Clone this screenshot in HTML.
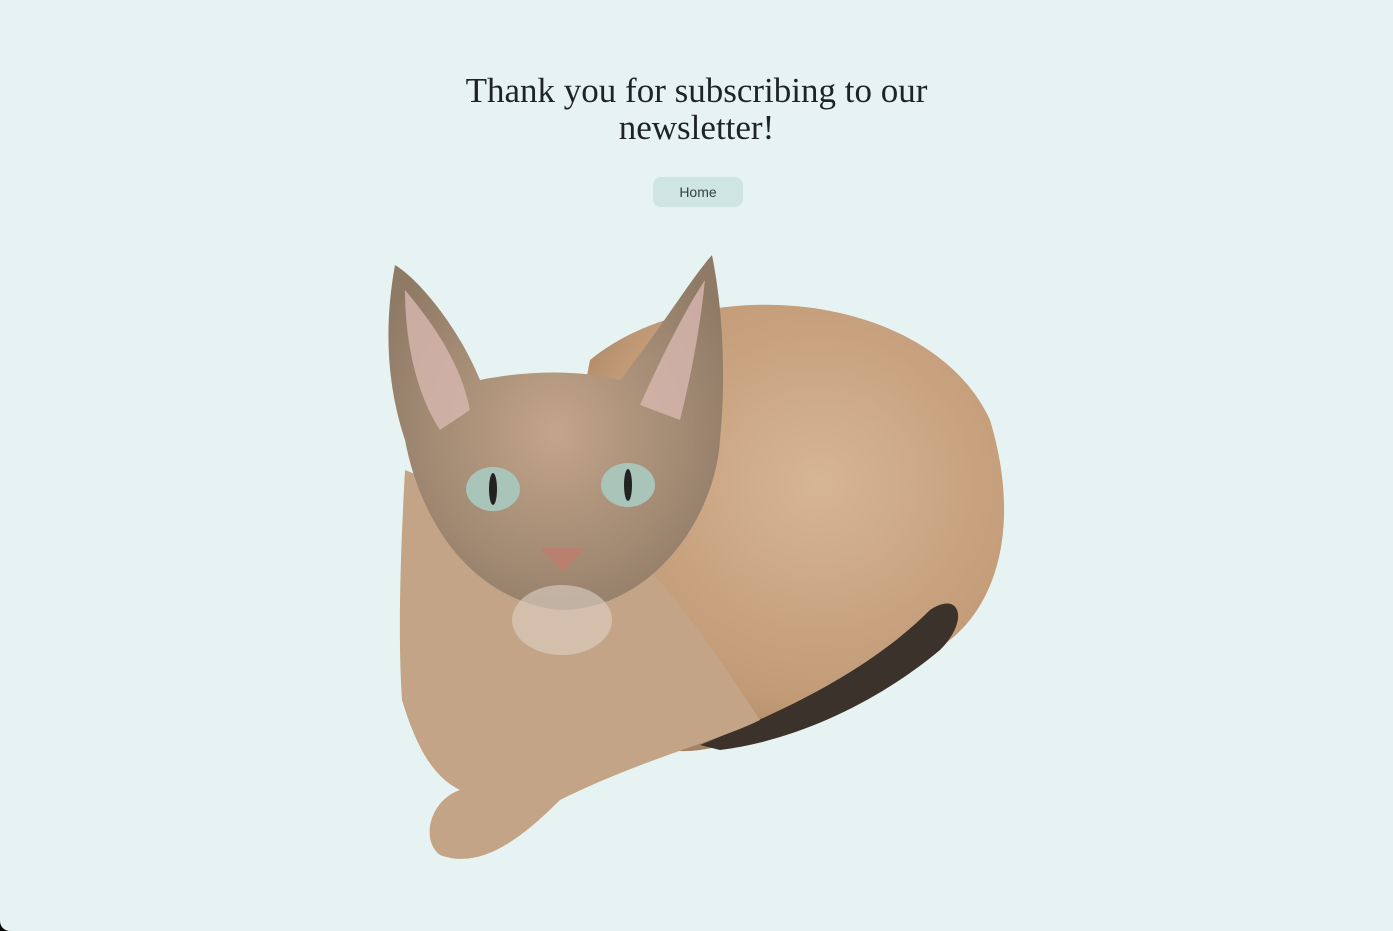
<!DOCTYPE html>
<html><head><meta charset="utf-8"><style>
html,body{margin:0;padding:0;width:1393px;height:931px;overflow:hidden;background:#000}
.page{position:absolute;left:0;top:0;width:1393px;height:931px;background:#e7f3f3;border-radius:0 0 0 10px}
h1{position:absolute;top:72px;left:0;width:1393px;margin:0;text-align:center;font-family:"Liberation Serif",serif;font-weight:normal;font-size:35px;line-height:37px;color:#1e2326}
.btn{position:absolute;left:653px;top:177px;width:90px;height:30px;border-radius:8px;background:#cfe5e1;font-family:"Liberation Sans",sans-serif;font-size:14px;line-height:31px;text-align:center;color:#34413f}
svg{position:absolute;left:0;top:0}
</style></head><body><div class="page">
<h1>Thank you for subscribing to our<br>newsletter!</h1>
<div class="btn">Home</div>
<svg width="1393" height="931" viewBox="0 0 1393 931">
<defs>
<radialGradient id="b" cx="0.6" cy="0.4" r="0.7"><stop offset="0" stop-color="#d6b595"/><stop offset="0.7" stop-color="#c29a76"/><stop offset="1" stop-color="#9b7a5c"/></radialGradient>
<radialGradient id="h" cx="0.5" cy="0.5" r="0.6"><stop offset="0" stop-color="#c3a58a"/><stop offset="1" stop-color="#8f7a66"/></radialGradient>
<filter id="s"><feGaussianBlur stdDeviation="6"/></filter>
</defs>
<path d="M590 360 C700 270 930 290 990 420 C1020 520 1000 600 950 640 C880 700 770 740 700 750 C620 760 560 700 540 620 Z" fill="url(#b)"/>
<path d="M700 745 C760 720 860 680 930 610 C960 590 970 620 940 650 C880 700 800 740 720 750 Z" fill="#3b322b"/>
<path d="M405 470 C400 560 398 640 402 700 C420 760 440 780 460 790 C430 800 420 840 440 855 C480 870 520 840 560 800 C640 760 720 740 760 720 C720 660 680 600 640 560 C580 540 480 500 405 470 Z" fill="#c4a486"/>
<path d="M395 265 C420 280 460 330 480 380 C530 370 580 370 620 380 C660 330 690 280 712 255 C725 320 725 390 720 440 C715 520 650 610 560 610 C470 600 420 520 405 440 C385 380 385 320 395 265 Z" fill="url(#h)"/>
<path d="M405 290 C430 320 460 360 470 410 L440 430 C420 400 405 350 405 290 Z" fill="#d8b8b0" opacity="0.8"/>
<path d="M705 280 C700 330 690 380 680 420 L640 405 C660 360 685 310 705 280 Z" fill="#d8b8b0" opacity="0.8"/>
<ellipse cx="493" cy="489" rx="27" ry="22" fill="#a9c4b8"/><ellipse cx="493" cy="489" rx="4" ry="16" fill="#222"/>
<ellipse cx="628" cy="485" rx="27" ry="22" fill="#a9c4b8"/><ellipse cx="628" cy="485" rx="4" ry="16" fill="#222"/>
<path d="M540 548 L585 548 L563 572 Z" fill="#b98070"/>
<ellipse cx="562" cy="620" rx="50" ry="35" fill="#ddd2c6" opacity="0.6"/>
</svg>
</div></body></html>
